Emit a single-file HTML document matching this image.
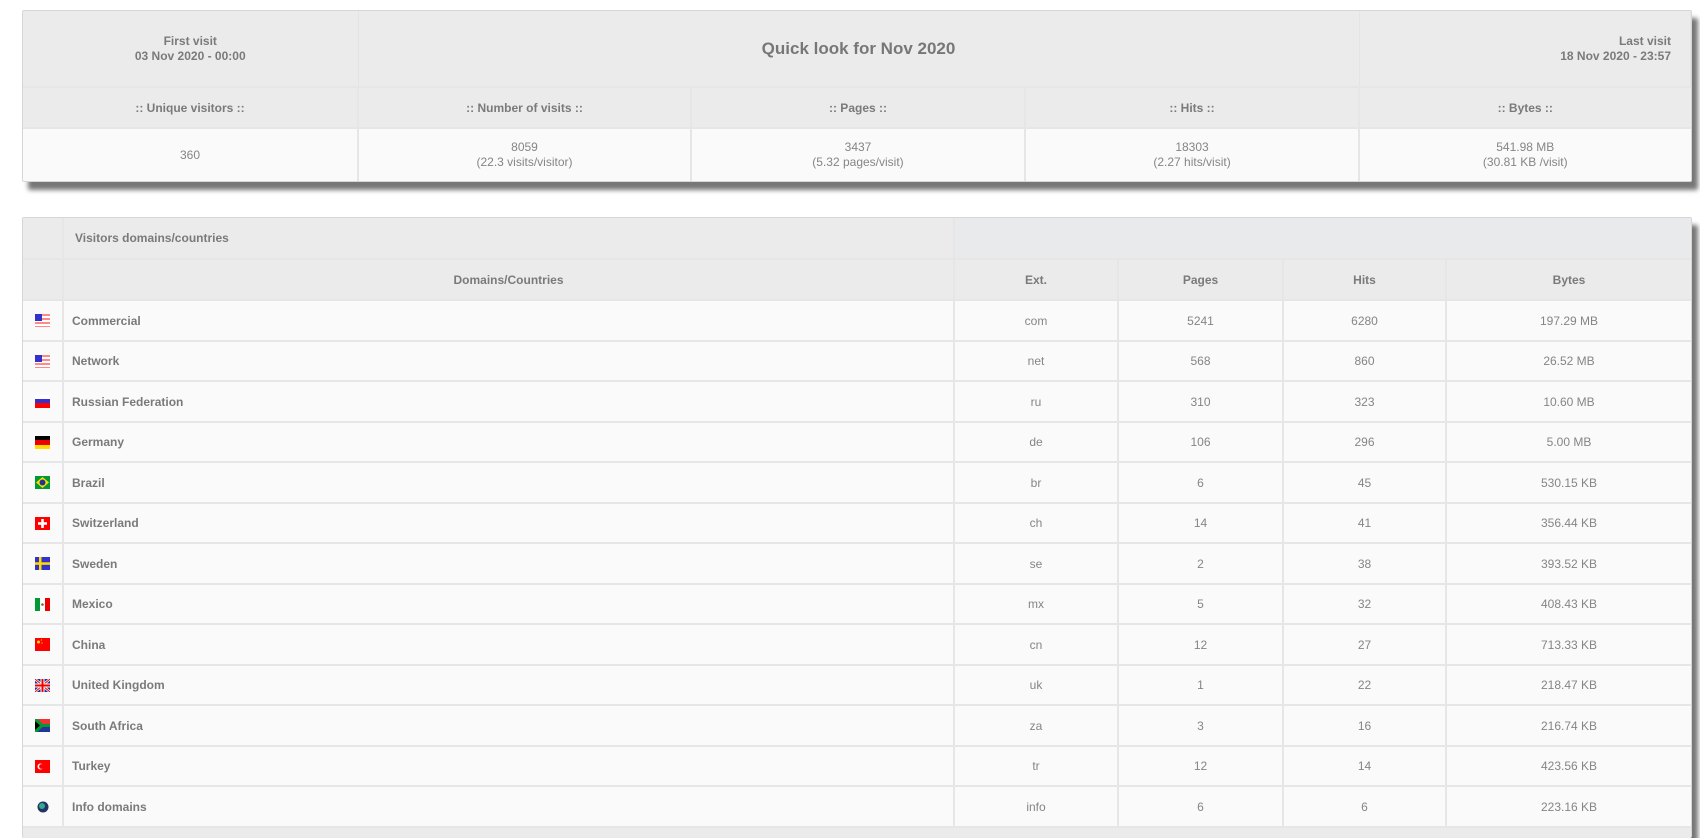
<!DOCTYPE html>
<html><head><style>
body{margin:0;width:1700px;height:818px;overflow:hidden;background:#fff;font-family:"Liberation Sans",Arial,sans-serif;font-size:12px;color:#808080}
.box{position:absolute;left:22px;width:1668px;border:1px solid #d6d6d6;border-radius:2px;box-shadow:6px 8px 5px #777;background:#ebebeb;overflow:hidden}
table{border-collapse:collapse;width:100%;table-layout:fixed}
td{text-align:center;padding:0;border-right:2px solid #e6e6e6;border-bottom:2px solid #e6e6e6}
td:last-child{border-right:none}
.h td{background:#ebebeb;font-weight:bold;color:#7a7a7a}
.d td{background:#fafafa;color:#858585}
.d td.n{text-align:left;padding-left:8px;font-weight:bold;color:#7a7a7a}
svg{display:block;margin:0 auto}
.top td{border-right:1px solid #e4e4e4}
</style></head><body>
<div class="box" style="top:10px;height:170px">
<table>
<colgroup><col style="width:335px"><col style="width:333px"><col style="width:334px"><col style="width:334px"><col></colgroup>
<tr class="h top" style="height:76px"><td style="font-size:12px;line-height:15px">First visit<br>03 Nov 2020 - 00:00</td><td colspan="3" style="font-size:17px;color:#777">Quick look for Nov 2020</td><td style="text-align:right;padding-right:19px;line-height:15px">Last visit<br>18 Nov 2020 - 23:57</td></tr>
<tr class="h" style="height:41px"><td>:: Unique visitors ::</td><td>:: Number of visits ::</td><td>:: Pages ::</td><td>:: Hits ::</td><td>:: Bytes ::</td></tr>
<tr class="d" style="height:53px"><td style="border-bottom:none">360</td><td style="border-bottom:none;line-height:15px">8059<br>(22.3 visits/visitor)</td><td style="border-bottom:none;line-height:15px">3437<br>(5.32 pages/visit)</td><td style="border-bottom:none;line-height:15px">18303<br>(2.27 hits/visit)</td><td style="border-bottom:none;line-height:15px">541.98 MB<br>(30.81 KB /visit)</td></tr>
</table></div>

<div class="box" style="top:217px;height:620px;border-bottom:none">
<table>
<colgroup><col style="width:40px"><col style="width:891px"><col style="width:164px"><col style="width:165px"><col style="width:163px"><col></colgroup>
<tr class="h" style="height:41px"><td></td><td style="text-align:left;padding-left:11px;background:#ebebeb">Visitors domains/countries</td><td colspan="4" style="background:#e9eaeb;border-left:2px solid #e6e6e6"></td></tr>
<tr class="h" style="height:41px"><td></td><td>Domains/Countries</td><td>Ext.</td><td>Pages</td><td>Hits</td><td>Bytes</td></tr>
<tr class="d" style="height:41px"><td><svg width="15" height="13"><rect width="15" height="13" fill="#f88"/><rect y="2" width="15" height="2" fill="#fff"/><rect y="6" width="15" height="2" fill="#fff"/><rect y="10" width="15" height="2" fill="#fff"/><rect width="7" height="7" fill="#33c"/></svg></td><td class="n">Commercial</td><td>com</td><td>5241</td><td>6280</td><td>197.29 MB</td></tr>
<tr class="d" style="height:40px"><td><svg width="15" height="13"><rect width="15" height="13" fill="#f88"/><rect y="2" width="15" height="2" fill="#fff"/><rect y="6" width="15" height="2" fill="#fff"/><rect y="10" width="15" height="2" fill="#fff"/><rect width="7" height="7" fill="#33c"/></svg></td><td class="n">Network</td><td>net</td><td>568</td><td>860</td><td>26.52 MB</td></tr>
<tr class="d" style="height:41px"><td><svg width="15" height="13"><rect width="15" height="4" fill="#fff"/><rect y="4" width="15" height="4" fill="#33c"/><rect y="8" width="15" height="5" fill="#f00"/></svg></td><td class="n">Russian Federation</td><td>ru</td><td>310</td><td>323</td><td>10.60 MB</td></tr>
<tr class="d" style="height:40px"><td><svg width="15" height="13"><rect width="15" height="4" fill="#000"/><rect y="4" width="15" height="5" fill="#e00"/><rect y="9" width="15" height="4" fill="#fd0"/></svg></td><td class="n">Germany</td><td>de</td><td>106</td><td>296</td><td>5.00 MB</td></tr>
<tr class="d" style="height:41px"><td><svg width="15" height="13"><rect width="15" height="13" fill="#093"/><path d="M7.5 1L14 6.5 7.5 12 1 6.5z" fill="#fd0"/><circle cx="7.5" cy="6.5" r="3" fill="#239"/></svg></td><td class="n">Brazil</td><td>br</td><td>6</td><td>45</td><td>530.15 KB</td></tr>
<tr class="d" style="height:40px"><td><svg width="15" height="13"><rect width="15" height="13" fill="#f00"/><rect x="6.2" y="2" width="2.6" height="9" fill="#fff"/><rect x="3" y="5.2" width="9" height="2.6" fill="#fff"/></svg></td><td class="n">Switzerland</td><td>ch</td><td>14</td><td>41</td><td>356.44 KB</td></tr>
<tr class="d" style="height:41px"><td><svg width="15" height="13"><rect width="15" height="13" fill="#33c"/><rect x="4" width="2.5" height="13" fill="#fd0"/><rect y="5.3" width="15" height="2.5" fill="#fd0"/></svg></td><td class="n">Sweden</td><td>se</td><td>2</td><td>38</td><td>393.52 KB</td></tr>
<tr class="d" style="height:40px"><td><svg width="15" height="13"><rect width="5" height="13" fill="#093"/><rect x="5" width="5" height="13" fill="#fff"/><rect x="10" width="5" height="13" fill="#e00"/><circle cx="7.5" cy="6.5" r="1.3" fill="#763"/></svg></td><td class="n">Mexico</td><td>mx</td><td>5</td><td>32</td><td>408.43 KB</td></tr>
<tr class="d" style="height:41px"><td><svg width="15" height="13"><rect width="15" height="13" fill="#f00"/><circle cx="3.5" cy="4" r="1.5" fill="#fd0"/><circle cx="6.5" cy="2" r=".6" fill="#fd0"/><circle cx="7" cy="5" r=".6" fill="#fd0"/></svg></td><td class="n">China</td><td>cn</td><td>12</td><td>27</td><td>713.33 KB</td></tr>
<tr class="d" style="height:40px"><td><svg width="15" height="13"><rect width="15" height="13" fill="#239"/><path d="M0 0L15 13M15 0L0 13" stroke="#fff" stroke-width="2.5"/><path d="M0 0L15 13M15 0L0 13" stroke="#e00" stroke-width="1"/><rect x="5.5" width="4" height="13" fill="#fff"/><rect y="4.5" width="15" height="4" fill="#fff"/><rect x="6.5" width="2" height="13" fill="#e00"/><rect y="5.5" width="15" height="2" fill="#e00"/></svg></td><td class="n">United Kingdom</td><td>uk</td><td>1</td><td>22</td><td>218.47 KB</td></tr>
<tr class="d" style="height:41px"><td><svg width="15" height="13"><rect width="15" height="6.5" fill="#e33"/><rect y="6.5" width="15" height="6.5" fill="#239"/><path d="M0 0L7 6.5 0 13" fill="#fd0"/><path d="M0 0L7 6.5 15 6.5" stroke="#093" stroke-width="3" fill="none"/><path d="M0 13L7 6.5" stroke="#093" stroke-width="3"/><path d="M0 2L5 6.5 0 11z" fill="#000"/></svg></td><td class="n">South Africa</td><td>za</td><td>3</td><td>16</td><td>216.74 KB</td></tr>
<tr class="d" style="height:40px"><td><svg width="15" height="13"><rect width="15" height="13" fill="#f00"/><circle cx="5.5" cy="6.5" r="3" fill="#fff"/><circle cx="6.5" cy="6.5" r="2.4" fill="#f00"/></svg></td><td class="n">Turkey</td><td>tr</td><td>12</td><td>14</td><td>423.56 KB</td></tr>
<tr class="d" style="height:41px"><td><svg width="12" height="12"><circle cx="6" cy="6" r="5.5" fill="#236"/><circle cx="5" cy="5" r="3" fill="#3a8"/></svg></td><td class="n">Info domains</td><td>info</td><td>6</td><td>6</td><td>223.16 KB</td></tr>
</table></div>
</body></html>
